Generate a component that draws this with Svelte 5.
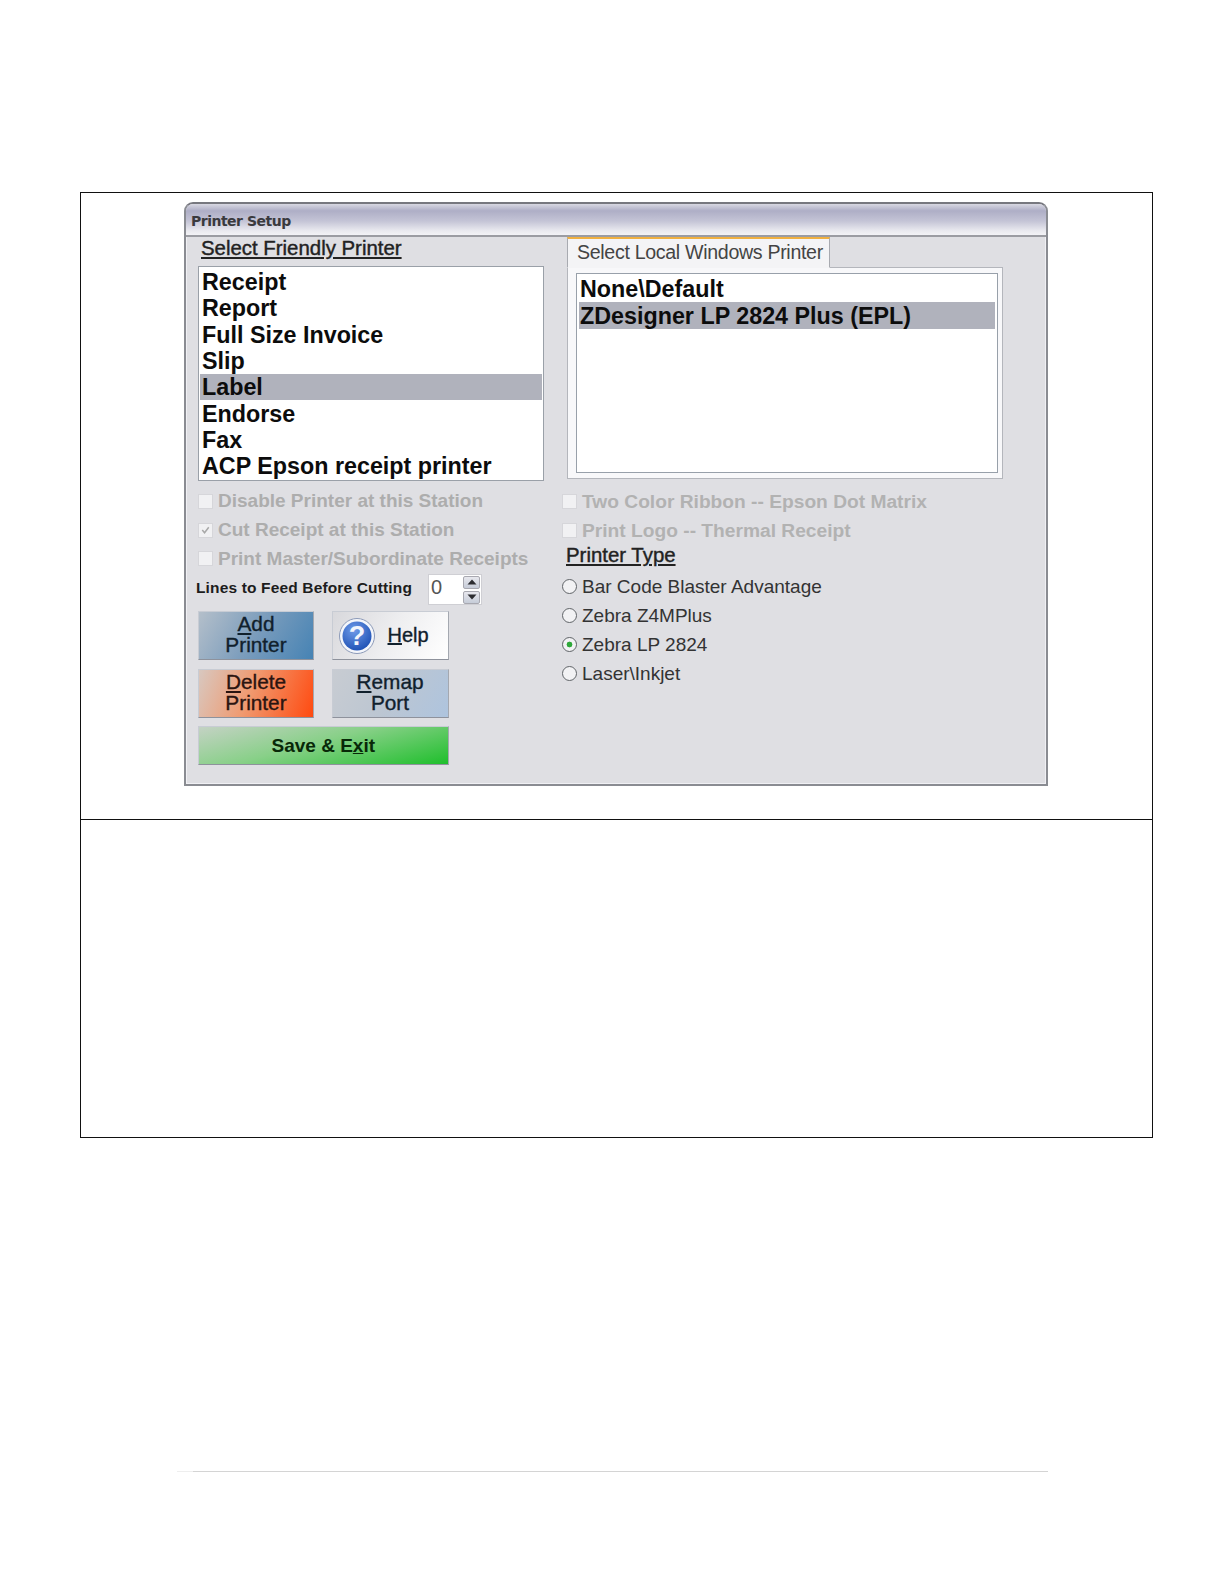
<script>
  const friendly = ['Receipt', 'Report', 'Full Size Invoice', 'Slip', 'Label', 'Endorse', 'Fax', 'ACP Epson receipt printer'];
  const local = ['None\\Default', 'ZDesigner LP 2824 Plus (EPL)'];
  const leftChecks = [
    { text: 'Disable Printer at this Station', checked: false },
    { text: 'Cut Receipt at this Station', checked: true },
    { text: 'Print Master/Subordinate Receipts', checked: false }
  ];
  const rightChecks = ['Two Color Ribbon -- Epson Dot Matrix', 'Print Logo -- Thermal Receipt'];
  const types = ['Bar Code Blaster Advantage', 'Zebra Z4MPlus', 'Zebra LP 2824', 'Laser\\Inkjet'];

  let selectedFriendly = $state('Label');
  let selectedLocal = $state('ZDesigner LP 2824 Plus (EPL)');
  let printerType = $state('Zebra LP 2824');
</script>

<div class="page">
  <div class="sheet">
    <div class="cell top">
      <div class="window">
        <div class="title">Printer Setup</div>
        <div class="body">
          <div class="left">
            <div class="heading friendly-heading">Select Friendly Printer</div>
            <div class="list friendly">
              {#each friendly as item}
                <button class="row" class:sel={selectedFriendly === item} onclick={() => (selectedFriendly = item)}>{item}</button>
              {/each}
            </div>
            <div class="checks">
              {#each leftChecks as c}
                <div class="check">
                  <span class="box">
                    {#if c.checked}
                      <svg viewBox="0 0 14 14" width="14" height="14"><path d="M3.5 7l2.5 3 4.5-6" fill="none" stroke="#a8a8a8" stroke-width="1.6" /></svg>
                    {/if}
                  </span>
                  <span>{c.text}</span>
                </div>
              {/each}
            </div>
            <div class="feed">
              <span class="feed-label">Lines to Feed Before Cutting</span>
              <div class="spin">
                <span class="spin-val">0</span>
                <div class="arrows">
                  <span class="arrow"><svg viewBox="0 0 12 8" width="12" height="8"><path d="M1.5 6.5L6 1.5l4.5 5z" fill="#2c2c30" /></svg></span>
                  <span class="arrow"><svg viewBox="0 0 12 8" width="12" height="8"><path d="M1.5 1.5L6 6.5l4.5-5z" fill="#2c2c30" /></svg></span>
                </div>
              </div>
            </div>
            <div class="buttons">
              <button class="btn add"><span><u>A</u>dd<br />Printer</span></button>
              <button class="btn help">
                <svg viewBox="0 0 38 38" width="38" height="38">
                  <defs>
                    <radialGradient id="q" cx="40%" cy="30%" r="75%">
                      <stop offset="0" stop-color="#6f9be8" />
                      <stop offset="1" stop-color="#1c4fb4" />
                    </radialGradient>
                  </defs>
                  <circle cx="19" cy="19" r="17.5" fill="#f4f6fb" stroke="#8c9ab8" />
                  <circle cx="19" cy="19" r="14.5" fill="url(#q)" />
                  <text x="19" y="28" text-anchor="middle" class="q-mark">?</text>
                </svg>
                <span class="help-text"><u>H</u>elp</span>
              </button>
              <button class="btn del"><span><u>D</u>elete<br />Printer</span></button>
              <button class="btn remap"><span><u>R</u>emap<br />Port</span></button>
              <button class="btn save"><span>Save &amp; E<u>x</u>it</span></button>
            </div>
          </div>
          <div class="right">
            <div class="tab">Select Local Windows Printer</div>
            <div class="panel">
              <div class="list local">
                {#each local as item}
                  <button class="row" class:sel={selectedLocal === item} onclick={() => (selectedLocal = item)}>{item}</button>
                {/each}
              </div>
            </div>
            <div class="checks right-checks">
              {#each rightChecks as text}
                <div class="check">
                  <span class="box"></span>
                  <span>{text}</span>
                </div>
              {/each}
            </div>
            <div class="heading type-heading">Printer Type</div>
            <div class="radios">
              {#each types as t}
                <button class="radio" onclick={() => (printerType = t)}>
                  <span class="dot" class:on={printerType === t}></span>
                  <span>{t}</span>
                </button>
              {/each}
            </div>
          </div>
        </div>
      </div>
    </div>
    <div class="cell bottom"></div>
  </div>
  <div class="footer-line"></div>
</div>

<style>
  :global(body) {
    margin: 0;
    background: #fff;
  }
  .page {
    height: 1584px;
    padding-top: 192px;
    box-sizing: border-box;
    font-family: "Liberation Sans", Arial, sans-serif;
    color: #111;
  }
  .sheet {
    margin-left: 80px;
    width: 1071px;
    border: 1px solid #111;
  }
  .cell.top {
    height: 627px;
    border-bottom: 1px solid #111;
    box-sizing: border-box;
    padding: 9px 0 0 103px;
  }
  .cell.bottom {
    height: 317px;
  }
  .window {
    width: 864px;
    height: 584px;
    box-sizing: border-box;
    border: 2px solid #8a8c92;
    border-top-color: #77787f;
    border-radius: 9px 9px 0 0;
    background: #dfdfe3;
    box-shadow: inset 0 0 0 1px #f0f0f4;
    display: flex;
    flex-direction: column;
  }
  .title {
    height: 33px;
    flex: none;
    box-sizing: border-box;
    padding: 9px 0 0 5px;
    font-family: "DejaVu Sans", sans-serif;
    font-size: 14px;
    font-weight: bold;
    letter-spacing: -0.5px;
    color: #3a3a3e;
    background: linear-gradient(#d8d8e2 0%, #aeaec6 22%, #c4c4d6 55%, #e8e8ee 85%, #f3f3f6 100%);
    border-bottom: 2px solid #9b9ca2;
    border-radius: 7px 7px 0 0;
  }
  .body {
    flex: 1;
    display: flex;
  }
  .left {
    width: 375px;
    flex: none;
    padding-left: 12px;
    box-sizing: border-box;
  }
  .heading {
    font-size: 20.4px;
    font-weight: normal;
    -webkit-text-stroke: 0.4px #222;
    text-decoration: underline;
    color: #222;
    line-height: 24px;
  }
  .friendly-heading {
    padding-left: 3px;
    margin-top: -1px;
    height: 30px;
  }
  .list {
    background: #fff;
    box-sizing: border-box;
    border: 1px solid #9aa0a8;
    display: flex;
    flex-direction: column;
  }
  .friendly {
    width: 346px;
    height: 215px;
    padding: 2px 1px 0;
  }
  .row {
    display: block;
    width: 100%;
    height: 26.3px;
    flex: none;
    border: 0;
    padding: 0 0 0 2px;
    background: none;
    text-align: left;
    font: bold 23.3px/26px "Liberation Sans", Arial, sans-serif;
    color: #0c0c0c;
    white-space: nowrap;
  }
  .row.sel {
    background: #b0b2bc;
  }
  .checks {
    display: flex;
    flex-direction: column;
    padding-top: 6px;
  }
  .check {
    height: 28.7px;
    display: flex;
    align-items: center;
    gap: 5px;
    font-size: 19px;
    font-weight: bold;
    color: #adadad;
    white-space: nowrap;
  }
  .box {
    width: 15px;
    height: 15px;
    flex: none;
    background: #f1f1f3;
    border: 1px solid #d6d6da;
    box-sizing: border-box;
    display: flex;
    align-items: center;
    justify-content: center;
  }
  .feed {
    display: flex;
    align-items: center;
    margin-left: -2px;
    margin-top: 1px;
    height: 31px;
  }
  .feed-label {
    width: 232px;
    padding-bottom: 3px;
    font-size: 15.5px;
    font-weight: bold;
    letter-spacing: 0.15px;
    color: #1c1c1c;
    white-space: nowrap;
  }
  .spin {
    width: 54px;
    height: 31px;
    box-sizing: border-box;
    background: #fff;
    border: 1px solid #cfcfd4;
    display: flex;
    justify-content: space-between;
    padding: 0 1px 0 2px;
  }
  .spin-val {
    font-size: 20px;
    line-height: 25px;
    color: #555;
  }
  .arrows {
    display: flex;
    flex-direction: column;
    justify-content: center;
    gap: 2px;
  }
  .arrow {
    width: 17px;
    height: 13px;
    box-sizing: border-box;
    background: linear-gradient(#e8e8ee, #c6ccd8);
    border: 1px solid #a8a8b0;
    border-radius: 2px;
    display: flex;
    align-items: center;
    justify-content: center;
  }
  .buttons {
    display: grid;
    grid-template-columns: 116px 117px;
    column-gap: 17.5px;
    grid-template-rows: 49px 49px 39px;
    row-gap: 8.5px;
    margin-top: 6px;
  }
  .btn {
    border: 1px solid #c8ccd4;
    border-bottom-color: #8e929c;
    border-right-color: #a4a8b0;
    padding: 0 0 3px;
    font: 20.8px/21px "Liberation Sans", Arial, sans-serif;
    -webkit-text-stroke: 0.35px #10202c;
    color: #10202c;
    text-align: center;
  }
  .add {
    background: linear-gradient(120deg, #b4bfca 0%, #7a9cbc 50%, #4683b4 100%);
  }
  .help {
    display: flex;
    align-items: center;
    padding: 0 0 0 5px;
    gap: 12px;
    background: linear-gradient(120deg, #d8d8dc 0%, #eeeef0 50%, #fff 100%);
  }
  .help-text {
    font-size: 20px;
  }
  .q-mark {
    font: bold 27px "Liberation Sans", Arial, sans-serif;
    fill: #f2f5fc;
    stroke: none;
    -webkit-text-stroke: 0;
  }
  .del {
    background: linear-gradient(110deg, #d8c8c0 0%, #f09a70 45%, #ff4a10 100%);
    color: #2a1410;
    -webkit-text-stroke-color: #2a1410;
  }
  .remap {
    background: linear-gradient(120deg, #c8ccd2 0%, #bcc6d2 50%, #aec4de 100%);
  }
  .save {
    grid-column: 1 / 3;
    padding: 0;
    font-size: 19px;
    font-weight: bold;
    -webkit-text-stroke: 0;
    color: #082808;
    background: linear-gradient(165deg, #c4d2c4 0%, #88d088 45%, #1fbf2c 100%);
  }
  .right {
    flex: 1;
    padding: 0 0 0 6px;
    box-sizing: border-box;
  }
  .tab {
    width: 263px;
    height: 31px;
    box-sizing: border-box;
    border-top: 2px solid #f0b040;
    border-left: 1px solid #a8aab0;
    border-right: 1px solid #a8aab0;
    background: #f4f4f6;
    font-size: 19.6px;
    line-height: 26px;
    letter-spacing: -0.32px;
    color: #444;
    padding-left: 9px;
    white-space: nowrap;
    position: relative;
    z-index: 1;
    margin-bottom: -1px;
    border-bottom: 1px solid #f4f4f6;
  }
  .panel {
    width: 436px;
    height: 212px;
    box-sizing: border-box;
    background: #f8f8fa;
    border: 1px solid #b4b6bc;
    padding: 5px 4px 5px 8px;
  }
  .local {
    height: 100%;
    border-color: #98a0aa;
    padding: 1px 2px;
  }
  .local .row {
    padding-left: 1px;
    height: 27px;
  }
  .right-checks {
    padding-top: 8.5px;
    margin-left: -5px;
  }
  .right-checks .check {
    font-size: 19.2px;
    color: #b2b2b2;
  }
  .type-heading {
    margin: -1.5px 0 0 -1px;
    height: 28px;
  }
  .radios {
    margin-left: -5px;
    padding-top: 1px;
  }
  .radio {
    display: flex;
    align-items: center;
    gap: 5px;
    height: 29px;
    padding: 0;
    border: 0;
    background: none;
    font: 19px "Liberation Sans", Arial, sans-serif;
    color: #333;
    white-space: nowrap;
  }
  .dot {
    width: 15px;
    height: 15px;
    flex: none;
    box-sizing: border-box;
    border-radius: 50%;
    border: 1.5px solid #606468;
    background: #f2f2f4;
    display: block;
  }
  .dot.on {
    background: radial-gradient(circle, #2fa83a 0 2.6px, #f2f2f4 3.2px);
  }
  .footer-line {
    margin: 333px 0 0 177px;
    width: 871px;
    height: 1px;
    background: linear-gradient(90deg, #eeeeee 0 16px, #d4d4d4 16px);
  }
</style>
